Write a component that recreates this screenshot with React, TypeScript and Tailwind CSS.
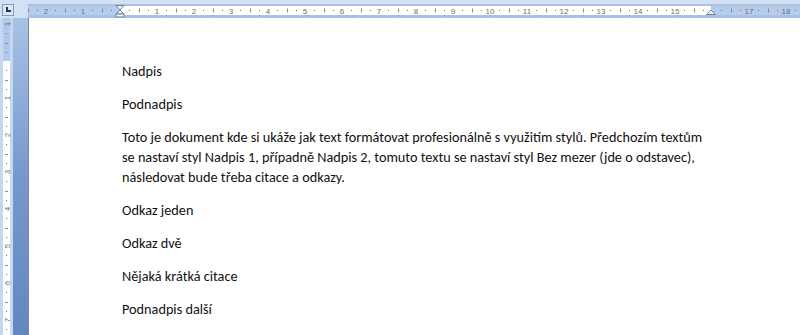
import React from 'react';

const CM = 37;
const ORIGIN_X = 120 - 28; // zero of the top ruler, inside its svg
const ORIGIN_Y = 61 - 18; // zero of the side ruler, inside its svg
const RIGHT_MARGIN = 711 - 28;

const quarters = (from: number, to: number) => {
  const out: number[] = [];
  for (let q = from; q <= to; q++) out.push(q);
  return out;
};

function TopRuler() {
  const ticks = quarters(-10, 75);
  const tabs = quarters(1, 12).map((k) => ORIGIN_X + 46.3 * k);
  return (
    <svg width={772} height={18} className="block shrink-0">
      <rect x={0} y={0} width={772} height={4} fill="#d3e1f4" />
      <rect x={0} y={4} width={772} height={2} fill="#a9c2e4" />
      <rect x={0} y={6} width={ORIGIN_X} height={9} fill="#b6cceb" />
      <rect x={ORIGIN_X} y={6} width={RIGHT_MARGIN - ORIGIN_X} height={9} fill="#ffffff" />
      <rect x={RIGHT_MARGIN} y={6} width={772 - RIGHT_MARGIN} height={9} fill="#b6cceb" />
      <rect x={0} y={15} width={772} height={3} fill="#a8c1e5" />
      {ticks.map((q) => {
        const x = ORIGIN_X + (q * CM) / 4;
        if (q % 4 === 0) {
          const n = Math.abs(q / 4);
          if (n === 0 || q / 4 === 16) return null;
          return (
            <text
              key={q}
              x={x}
              y={13.5}
              fontSize={8}
              fill="#6e6e6e"
              textAnchor="middle"
              fontFamily="'Liberation Sans', sans-serif"
            >
              {n}
            </text>
          );
        }
        if (q % 2 === 0) return <rect key={q} x={Math.round(x)} y={8.5} width={1} height={4} fill="#8a8a8a" />;
        return <rect key={q} x={Math.round(x)} y={10} width={1} height={1} fill="#6e6e6e" />;
      })}
      {tabs.filter((x) => x < RIGHT_MARGIN).map((x) => (
        <rect key={x} x={Math.round(x)} y={15} width={1} height={2} fill="#8ea6c8" />
      ))}
      {/* indent markers */}
      <path d={`M${ORIGIN_X - 4} 5.5 h8 l-4 4.5 z`} fill="#f2f6fc" stroke="#6f819c" strokeWidth={1} />
      <path d={`M${ORIGIN_X} 10 l4 4 h-8 z`} fill="#f2f6fc" stroke="#6f819c" strokeWidth={1} />
      <rect x={ORIGIN_X - 4} y={14} width={8} height={3} fill="#f2f6fc" stroke="#6f819c" strokeWidth={1} />
      <path d={`M${RIGHT_MARGIN} 10 l4.5 4.5 h-9 z`} fill="#f2f6fc" stroke="#6f819c" strokeWidth={1} />
    </svg>
  );
}

function SideRuler() {
  const ticks = quarters(-4, 31);
  return (
    <svg width={13} height={317} className="block shrink-0">
      <rect x={0} y={0} width={13} height={317} fill="#c5d8f1" />
      <rect x={3} y={0} width={7} height={ORIGIN_Y} fill="#b0c8ea" />
      <rect x={3} y={ORIGIN_Y} width={7} height={317 - ORIGIN_Y} fill="#ffffff" />
      {ticks.map((q) => {
        const y = ORIGIN_Y + (q * CM) / 4;
        if (q % 4 === 0) {
          const n = Math.abs(q / 4);
          if (n === 0) return null;
          return (
            <text
              key={q}
              x={6.5}
              y={y + 3}
              fontSize={8}
              fill="#6e6e6e"
              textAnchor="middle"
              fontFamily="'Liberation Sans', sans-serif"
              transform={`rotate(-90 6.5 ${y})`}
            >
              {n}
            </text>
          );
        }
        if (q % 2 === 0) return <rect key={q} x={5} y={Math.round(y)} width={3} height={1} fill="#8a8a8a" />;
        return <rect key={q} x={6} y={Math.round(y)} width={1} height={1} fill="#6e6e6e" />;
      })}
    </svg>
  );
}

const PARAS = ['Odkaz jeden', 'Odkaz dvě', 'Nějaká krátká citace', 'Podnadpis další'];

export default function App() {
  return (
    <div className="w-[800px] h-[335px] overflow-hidden flex flex-col bg-[#c5d8f1]">
      {/* ruler row */}
      <div className="flex h-[18px] shrink-0">
        <div className="w-[28px] h-[18px] bg-[#d3e1f4] pt-[4px] pl-[2px]">
          <div className="w-[12px] h-[12px] border border-[#7d9bc8] bg-[#dce8f7] flex items-center justify-center">
            <div className="w-[5px] h-[5px] border-l-2 border-b-2 border-[#333] ml-[1px] mb-[1px]" />
          </div>
        </div>
        <TopRuler />
      </div>

      <div className="flex flex-1 min-h-0">
        <SideRuler />
        <div className="w-[15px] bg-gradient-to-b from-[#a8c2e6] via-[#7798cd] to-[#6287c1]" />
        <div className="w-px bg-[#7b8696]" />

        {/* page */}
        <div className="flex-1 bg-white pl-[93px] pt-[43px] font-['Carlito','Lato',sans-serif] text-[14.25px] leading-[20px] text-[#111]">
          <p className="mb-[13px]">Nadpis</p>
          <p className="mb-[13px]">Podnadpis</p>
          <p className="mb-[13px] whitespace-nowrap">
            Toto je dokument kde si ukáže jak text formátovat profesionálně s využitím stylů. Předchozím textům
            <br />
            se nastaví styl Nadpis 1, případně Nadpis 2, tomuto textu se nastaví styl Bez mezer (jde o odstavec),
            <br />
            následovat bude třeba citace a odkazy.
          </p>
          {PARAS.map((t) => (
            <p key={t} className="mb-[13px]">
              {t}
            </p>
          ))}
        </div>
      </div>
    </div>
  );
}
